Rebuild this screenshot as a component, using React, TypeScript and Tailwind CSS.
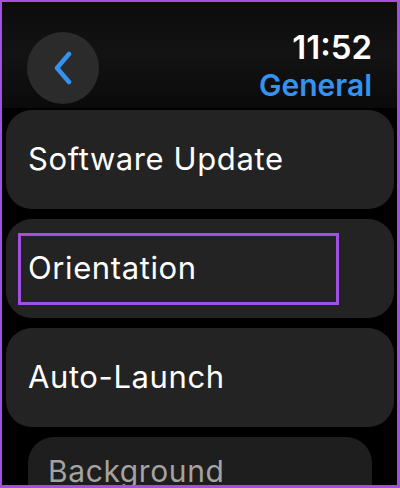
import { ReactNode } from "react";

const font = { fontFamily: "Inter, 'Liberation Sans', sans-serif" };

const Row = ({ children, className }: { children: ReactNode; className?: string }) => (
  <div
    className={
      "relative flex h-[99px] w-[388px] items-center rounded-[26px] bg-[#232323] pl-[22px] text-[31px] font-normal tracking-[0.6px] text-white " +
      (className ?? "")
    }
  >
    {children}
  </div>
);

export default function App() {
  return (
    <div
      style={font}
      className="h-[488px] w-[400px] overflow-hidden border-t-2 border-r-[3px] border-b-[3px] border-l-2 border-[#a24fe6] bg-black"
    >
      <div className="flex h-[106px] justify-between bg-gradient-to-b from-[#0c0c0c] via-[#131313] to-[#0a0a0a]">
        <button
          type="button"
          className="ml-[25px] mt-[30px] flex h-[72px] w-[72px] items-center justify-center rounded-full bg-[#2b2b2b]"
        >
          <svg width="22" height="34" viewBox="0 0 22 34" fill="none">
            <path d="M17 3 L5 17 L17 31" stroke="#3592ee" strokeWidth="4.5" strokeLinecap="round" strokeLinejoin="round" />
          </svg>
        </button>
        <div className="mr-[25px] mt-[27px] flex flex-col items-end">
          <span className="text-[33px] font-semibold leading-[36px] text-white">11:52</span>
          <span className="mt-[3px] text-[30px] font-semibold leading-[34px] text-[#3592ee]">General</span>
        </div>
      </div>

      <div className="flex flex-col gap-[10px] pl-[4px] pt-[2px]">
        <Row>Software Update</Row>
        <Row>
          <div className="absolute left-[12px] top-[14px] h-[72px] w-[321px] border-[3px] border-[#a24fe6]" />
          Orientation
        </Row>
        <Row>Auto-Launch</Row>
        <div className="ml-[22px] flex h-[80px] w-[344px] items-start rounded-[26px] bg-[#1e1e1e] pl-[20px] pt-[12px] text-[30px] font-normal tracking-[0.6px] text-[#a3a3a3]">
          Background
        </div>
      </div>
    </div>
  );
}
